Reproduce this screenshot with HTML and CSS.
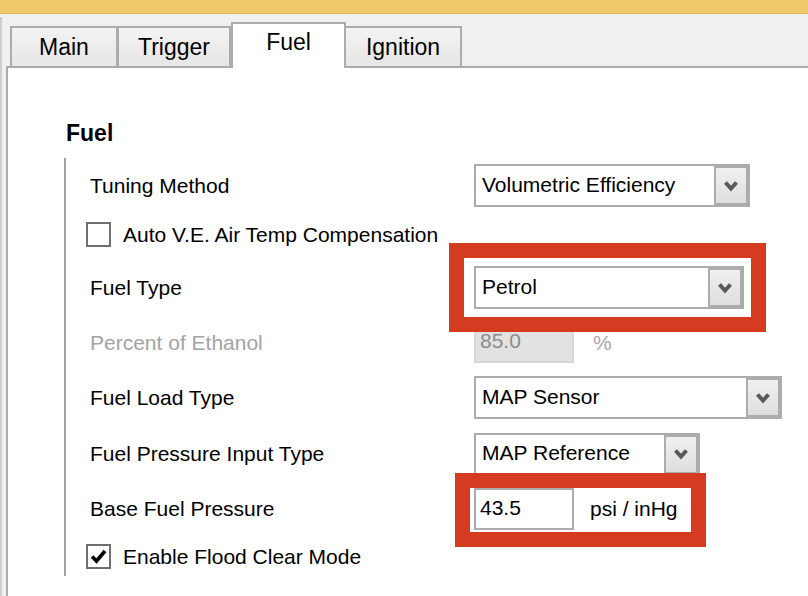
FILE: index.html
```html
<!DOCTYPE html>
<html>
<head>
<meta charset="utf-8">
<title>Fuel settings</title>
<link rel="stylesheet" href="styles.css">
</head>
<body>
<div class="titlebar"></div>
<div class="window">
  <div class="edge"></div>
  <div class="tabctl">
    <div class="tabrow">
      <div class="tab tab-main">Main</div>
      <div class="tab tab-trigger">Trigger</div>
      <div class="tab tab-fuel active">Fuel</div>
      <div class="tab tab-ignition">Ignition</div>
    </div>
    <div class="panel">
      <h2 class="heading">Fuel</h2>
      <div class="section">
        <div class="row r1">
          <span class="label">Tuning Method</span>
          <div class="combo w-tuning"><span class="combo-text">Volumetric Efficiency</span><span class="combo-btn"><svg width="16" height="12" viewBox="0 0 16 12"><polyline points="2.5,2.5 8,8.5 13.5,2.5" fill="none" stroke="#595959" stroke-width="4"/></svg></span></div>
        </div>
        <div class="row r2 check-row">
          <span class="checkbox"></span>
          <span class="check-label">Auto V.E. Air Temp Compensation</span>
        </div>
        <div class="row r3">
          <span class="label">Fuel Type</span>
          <div class="combo w-fueltype"><span class="combo-text">Petrol</span><span class="combo-btn"><svg width="16" height="12" viewBox="0 0 16 12"><polyline points="2.5,2.5 8,8.5 13.5,2.5" fill="none" stroke="#595959" stroke-width="4"/></svg></span></div>
        </div>
        <div class="row r4">
          <span class="label disabled">Percent of Ethanol</span>
          <div class="field">
            <span class="input input-disabled">85.0</span>
            <span class="unit unit-disabled">%</span>
          </div>
        </div>
        <div class="row r5">
          <span class="label">Fuel Load Type</span>
          <div class="combo w-load"><span class="combo-text">MAP Sensor</span><span class="combo-btn"><svg width="16" height="12" viewBox="0 0 16 12"><polyline points="2.5,2.5 8,8.5 13.5,2.5" fill="none" stroke="#595959" stroke-width="4"/></svg></span></div>
        </div>
        <div class="row r6">
          <span class="label">Fuel Pressure Input Type</span>
          <div class="combo w-pressure"><span class="combo-text">MAP Reference</span><span class="combo-btn"><svg width="16" height="12" viewBox="0 0 16 12"><polyline points="2.5,2.5 8,8.5 13.5,2.5" fill="none" stroke="#595959" stroke-width="4"/></svg></span></div>
        </div>
        <div class="row r7">
          <span class="label">Base Fuel Pressure</span>
          <div class="field">
            <span class="input">43.5</span>
            <span class="unit unit-psi">psi / inHg</span>
          </div>
        </div>
        <div class="row r8 check-row">
          <span class="checkbox checked"><svg width="21" height="21" viewBox="0 0 21 21"><path d="M4 10.5 L8.5 15 L17 5" fill="none" stroke="#000" stroke-width="3.6"/></svg></span>
          <span class="check-label">Enable Flood Clear Mode</span>
        </div>
      </div>
    </div>
  </div>
</div>
<div class="highlight hl-fueltype"></div>
<div class="highlight hl-pressure"></div>
</body>
</html>
```

FILE: styles.css
```css
* {
  box-sizing: border-box;
}

html, body {
  margin: 0;
  padding: 0;
}

body {
  width: 808px;
  height: 596px;
  overflow: hidden;
  background: #f0f0f0;
  font-family: "Liberation Sans", Arial, sans-serif;
  font-size: 21px;
  color: #000;
}

.titlebar {
  height: 14px;
  background: #f0c96b;
  border-bottom: 1px solid #dfb35a;
}

.window {
  display: flex;
  height: 582px;
}

.edge {
  width: 2px;
  margin-top: 4px;
  background: #cfcfcf;
  border-top: 1px solid #a9a9a9;
}

.tabctl {
  flex: 1;
  margin-left: 4px;
  display: flex;
  flex-direction: column;
}

.tabrow {
  height: 52px;
  display: flex;
  align-items: flex-end;
  padding-left: 4px;
}

.tab {
  height: 40px;
  border: 2px solid #acacac;
  border-bottom: none;
  background: linear-gradient(#f3f3f3, #e6e6e6);
  display: flex;
  align-items: center;
  justify-content: center;
  padding-top: 1px;
  font-size: 23px;
}

.tab-main {
  width: 108px;
}

.tab-trigger {
  width: 114px;
  margin-left: -1px;
}

.tab-fuel {
  width: 115px;
}

.tab-ignition {
  width: 118px;
  margin-left: -2px;
}

.tab.active {
  height: 46px;
  margin-bottom: -2px;
  background: #fff;
  position: relative;
  z-index: 1;
  padding-top: 0;
  padding-bottom: 8px;
}

.panel {
  flex: 1;
  background: #fff;
  border-top: 2px solid #acacac;
  border-left: 2px solid #acacac;
}

.heading {
  margin: 0;
  padding: 52px 0 0 58px;
  font-size: 23px;
  line-height: 26px;
  font-weight: bold;
}

.section {
  margin: 12px 0 0 56px;
  border-left: 2px solid #a3a3a3;
  height: 418px;
  padding-top: 2px;
  display: flex;
  flex-direction: column;
}

.row {
  display: flex;
  align-items: center;
  padding-left: 24px;
}

.r1 { height: 51px; }
.r2 { height: 50px; padding-bottom: 3px; }
.r3 { height: 53px; }
.r4 { height: 57px; }
.r5 { height: 53px; }
.r6 { height: 60px; }
.r7 { height: 50px; }
.r8 { height: 42px; padding-top: 3px; }

.label {
  width: 384px;
  flex: none;
}

.label.disabled {
  color: #a3a3a3;
}

.check-row {
  padding-left: 20px;
}

.checkbox {
  width: 25px;
  height: 25px;
  border: 2px solid #6f6f6f;
  background: #fff;
  flex: none;
  display: flex;
  align-items: center;
  justify-content: center;
}

.check-label {
  margin-left: 12px;
}

.combo {
  height: 43px;
  border: 2px solid #acacac;
  background: #fff;
  display: flex;
}

.w-tuning { width: 276px; }
.w-fueltype { width: 270px; }
.w-load { width: 308px; }
.w-pressure { width: 226px; }

.combo-text {
  flex: 1;
  padding-left: 6px;
  padding-bottom: 2px;
  display: flex;
  align-items: center;
  white-space: nowrap;
}

.combo-btn {
  width: 34px;
  flex: none;
  border: 2px solid #acacac;
  background: linear-gradient(#f0f0f0, #dedede);
  display: flex;
  align-items: center;
  justify-content: center;
}

.field {
  display: flex;
  align-items: center;
}

.input {
  width: 100px;
  height: 42px;
  border: 2px solid #acacac;
  background: #fff;
  padding-left: 4px;
  padding-bottom: 3px;
  display: flex;
  align-items: center;
}

.input-disabled {
  height: 41px;
  border-color: #d9d9d9;
  background: #e2e2e2;
  color: #8b8b8b;
}

.unit {
  margin-left: 16px;
}

.unit-disabled {
  margin-left: 19px;
  color: #a8a8a8;
}

.highlight {
  position: absolute;
  border: 15px solid #d43b21;
}

.hl-fueltype {
  left: 449px;
  top: 243px;
  width: 317px;
  height: 89px;
}

.hl-pressure {
  left: 455px;
  top: 473px;
  width: 251px;
  height: 74px;
}
```
